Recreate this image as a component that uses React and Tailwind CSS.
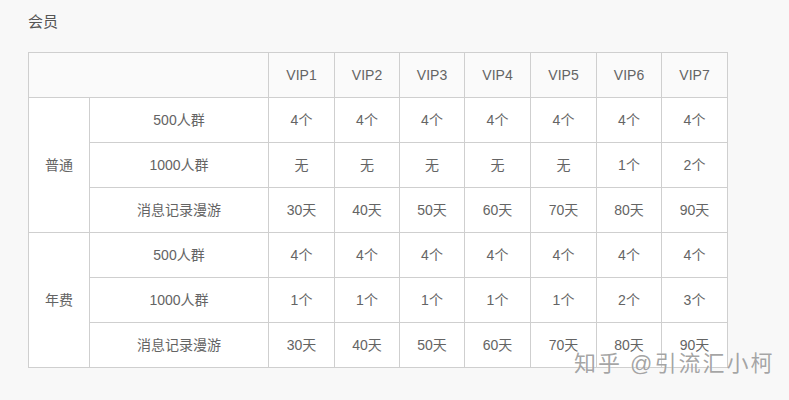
import React from 'react';

const vips = ['VIP1', 'VIP2', 'VIP3', 'VIP4', 'VIP5', 'VIP6', 'VIP7'];
const colWidths = [61, 179, 66, 65, 65, 66, 66, 65, 66];

const groups = [
    {
        name: '普通',
        rows: [
            { label: '500人群', values: ['4个', '4个', '4个', '4个', '4个', '4个', '4个'] },
            { label: '1000人群', values: ['无', '无', '无', '无', '无', '1个', '2个'] },
            { label: '消息记录漫游', values: ['30天', '40天', '50天', '60天', '70天', '80天', '90天'] },
        ],
    },
    {
        name: '年费',
        rows: [
            { label: '500人群', values: ['4个', '4个', '4个', '4个', '4个', '4个', '4个'] },
            { label: '1000人群', values: ['1个', '1个', '1个', '1个', '1个', '2个', '3个'] },
            { label: '消息记录漫游', values: ['30天', '40天', '50天', '60天', '70天', '80天', '90天'] },
        ],
    },
];

const cell = "border border-[#cfcfcf] text-center align-middle p-0";

const App = () => {
    return (
        <div
            className="relative w-[789px] h-[400px] bg-[#f8f8f8] text-[#646464] overflow-hidden px-[28px] pt-[12px]"
            style={{ fontFamily: '"Liberation Sans", "Noto Sans CJK SC", sans-serif' }}
        >
            <h2 className="text-[15px] leading-[20px] font-normal text-[#555]">会员</h2>

            <table className="mt-[20px] table-fixed border-collapse w-[700px] text-[14px]">
                <colgroup>
                    {colWidths.map((w, i) => (
                        <col key={i} style={{ width: w }} />
                    ))}
                </colgroup>
                <thead>
                    <tr className="h-[45px] bg-[#fafafa]">
                        <th colSpan={2} className={cell}></th>
                        {vips.map((v) => (
                            <th key={v} className={`${cell} font-normal`}>{v}</th>
                        ))}
                    </tr>
                </thead>
                <tbody className="bg-white">
                    {groups.map((g) =>
                        g.rows.map((r, i) => (
                            <tr key={g.name + i} className="h-[45px]">
                                {i === 0 && (
                                    <td rowSpan={3} className={cell}>{g.name}</td>
                                )}
                                <td className={cell}>{r.label}</td>
                                {r.values.map((v, j) => (
                                    <td key={j} className={cell}>{v}</td>
                                ))}
                            </tr>
                        ))
                    )}
                </tbody>
            </table>

            {/* watermark */}
            <div
                className="absolute left-[574px] top-[351px] text-[22px] leading-[26px] tracking-[2px] text-[rgba(125,125,125,0.7)] whitespace-nowrap"
                style={{ textShadow: '0 0 1px rgba(255,255,255,0.9)' }}
            >
                知乎 @引流汇小柯
            </div>
        </div>
    );
};

export default App;
